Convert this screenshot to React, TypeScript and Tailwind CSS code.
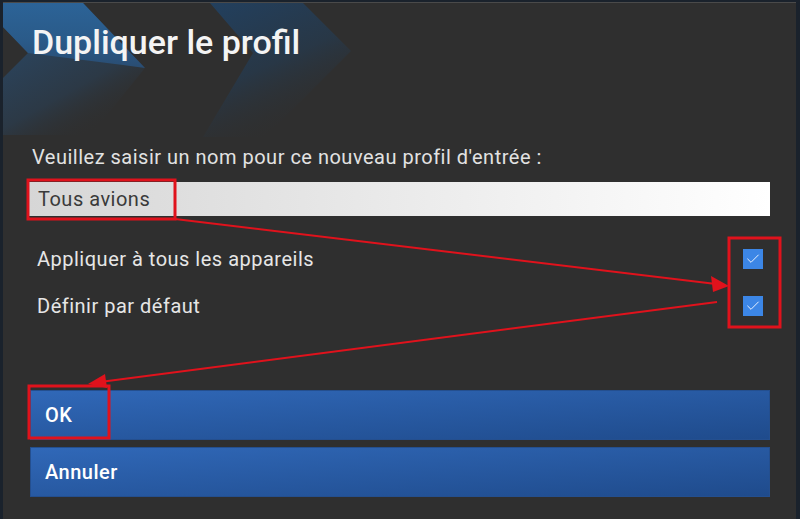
import { Check } from 'lucide-react';

function Chevrons() {
  return (
    <svg className="absolute left-0 top-0" width="400" height="140" viewBox="0 0 400 140">
      <defs>
        <linearGradient id="c1" x1="0" y1="0" x2="0" y2="1">
          <stop offset="0" stopColor="#2c6397" />
          <stop offset="0.6" stopColor="#2a5a88" />
          <stop offset="1" stopColor="#2a4d72" />
        </linearGradient>
        <linearGradient id="c1b" x1="0" y1="0" x2="0.6" y2="1">
          <stop offset="0" stopColor="#2a4b6c" />
          <stop offset="0.7" stopColor="#2c3946" />
          <stop offset="1" stopColor="#2f2f2f" stopOpacity="0" />
        </linearGradient>
        <linearGradient id="c2" x1="0" y1="0" x2="0.5" y2="1">
          <stop offset="0" stopColor="#22405f" />
          <stop offset="0.55" stopColor="#283746" />
          <stop offset="1" stopColor="#2f2f2f" stopOpacity="0" />
        </linearGradient>
      </defs>
      <polygon points="207,0 300,0 348,48 262,134 200,134 250,50" fill="url(#c2)" />
      <polygon points="0,0 80,0 142,65 88,132 0,132 0,75 25,50 0,24" fill="url(#c1b)" />
      <polygon points="0,0 80,0 142,65 120,62 25,50 0,24" fill="url(#c1)" />
    </svg>
  );
}

function Box({ checked }: { checked: boolean }) {
  return (
    <span className="flex h-[20px] w-[20px] items-center justify-center bg-[#3c86e6]">
      {checked && <Check size={16} strokeWidth={1.5} className="text-[#e8f1ff]" />}
    </span>
  );
}

export default function App() {
  const rows = ['Appliquer à tous les appareils', 'Définir par défaut'];

  return (
    <div className="relative flex h-[519px] w-[800px] bg-[#1a222c] pl-[3px] pr-[4px] pt-[2px]" style={{ fontFamily: 'Roboto, "Noto Sans", sans-serif' }}>
      <div className="relative flex flex-1 flex-col overflow-hidden border-t border-[#4a4a4a] bg-[#2f2f2f] pl-[25px] pr-[26px]">
        <Chevrons />
        <div className="relative h-[142px]">
          <h1 className="pl-[4px] pt-[19px] text-[34px] font-medium leading-[40px] text-[#f4f4f4]">Dupliquer le profil</h1>
        </div>
        <p className="-mt-[3px] pl-[4px] text-[20px] leading-[30px] tracking-[0.5px] text-[#e2e2e2]">Veuillez saisir un nom pour ce nouveau profil d'entrée :</p>
        <div className="mt-[10px] flex h-[34px] items-center bg-gradient-to-r from-[#d6d6d6] to-white pl-[10px] text-[20px] tracking-[0.5px] text-[#3a3a3a]">Tous avions</div>
        <div className="mt-[19px] flex flex-col">
          {rows.map(r => (
            <div key={r} className="flex h-[47px] items-center justify-between pl-[9px] pr-[7px]">
              <span className="text-[20px] tracking-[0.5px] text-[#e6e6e6]">{r}</span>
              <Box checked />
            </div>
          ))}
        </div>
        <div className="mt-[61px] flex flex-col gap-[7px] pl-[2px]">
          {['OK', 'Annuler'].map(b => (
            <button key={b} className="flex h-[50px] items-center border border-[#244f8f] bg-gradient-to-br from-[#3068b8] to-[#1f4b8c] pl-[14px] text-left text-[20px] font-medium tracking-[0.5px] text-white">{b}</button>
          ))}
        </div>
      </div>
      <svg className="pointer-events-none absolute inset-0" width="800" height="519">
        <g fill="none" stroke="#e0121c" strokeWidth="3">
          <rect x="28" y="180" width="147" height="39" />
          <rect x="729" y="238" width="51" height="89" />
          <rect x="29" y="386" width="80" height="52" />
        </g>
        <g stroke="#e0121c" strokeWidth="2">
          <line x1="175" y1="219" x2="716" y2="284" />
          <line x1="717" y1="302" x2="100" y2="382" />
        </g>
        <polygon points="729,286 711,276 713,292" fill="#e0121c" />
        <polygon points="88,384 105,374 107,388" fill="#e0121c" />
      </svg>
    </div>
  );
}
